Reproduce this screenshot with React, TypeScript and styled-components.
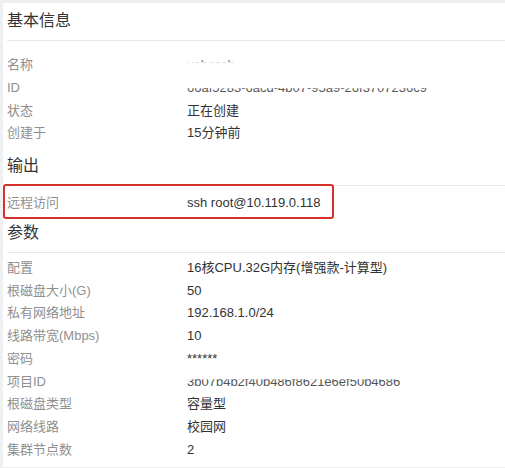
import * as React from "react";
import styled, { createGlobalStyle, css } from "styled-components";

interface TRow {
  label: string;
  value: string;
  hidden?: "name" | "id" | "project";
}

interface TSection {
  title: string;
  rows: TRow[];
  top: number;
  bottom: number;
  marked?: boolean;
}

const sections: TSection[] = [
  {
    title: "基本信息",
    top: 13,
    bottom: 3,
    rows: [
      { label: "名称", value: "usbcsch", hidden: "name" },
      { label: "ID", value: "66af5283-6acd-4b07-95a9-26f3707236c9", hidden: "id" },
      { label: "状态", value: "正在创建" },
      { label: "创建于", value: "15分钟前" },
    ],
  },
  {
    title: "输出",
    top: 6,
    bottom: 0,
    marked: true,
    rows: [{ label: "远程访问", value: "ssh root@10.119.0.118" }],
  },
  {
    title: "参数",
    top: 4,
    bottom: 5,
    rows: [
      { label: "配置", value: "16核CPU.32G内存(增强款-计算型)" },
      { label: "根磁盘大小(G)", value: "50" },
      { label: "私有网络地址", value: "192.168.1.0/24" },
      { label: "线路带宽(Mbps)", value: "10" },
      { label: "密码", value: "******" },
      { label: "项目ID", value: "3b07b4b2f40b486f8621e6ef50b4686", hidden: "project" },
      { label: "根磁盘类型", value: "容量型" },
      { label: "网络线路", value: "校园网" },
      { label: "集群节点数", value: "2" },
    ],
  },
];

const Global = createGlobalStyle`
  body {
    margin: 0;
    background: #eef0f2;
    font-family: "Liberation Sans", Arial, "Noto Sans CJK SC", sans-serif;
  }
`;

const Panel = styled.div`
  margin: 3px 0 3px 3px;
  padding-left: 4px;
  background: #fff;
`;

const Heading = styled.div`
  padding: 7px 0 8px;
  font-size: 16px;
  line-height: 22px;
  color: #333;
  border-bottom: 1px solid #e8e8e8;
`;

const Body = styled.div<{ $top: number; $bottom: number }>`
  padding: ${(p) => p.$top}px 0 ${(p) => p.$bottom}px;
`;

const Row = styled.div<{ $marked?: boolean }>`
  position: relative;
  display: grid;
  grid-template-columns: 180px 1fr;
  font-size: 13px;
  line-height: 22.75px;
  ${(p) =>
    p.$marked &&
    css`
      &::after {
        content: "";
        position: absolute;
        left: -4px;
        top: -8px;
        width: 327px;
        height: 31px;
        border: 2px solid #d8312b;
        border-radius: 3px;
      }
    `}
`;

const Label = styled.span`
  color: #8f8f8f;
`;

const Value = styled.span`
  color: #333;
`;

const clips = {
  name: "inset(6% 0 64% 0)",
  id: "inset(50% 0 10% 0)",
  project: "inset(38% 0 14% 0)",
};

const Hidden = styled.span<{ $kind: "name" | "id" | "project" }>`
  display: inline-block;
  color: #555;
  clip-path: ${(p) => clips[p.$kind]};
  opacity: ${(p) => (p.$kind === "name" ? 0.8 : 1)};
`;

export default function App() {
  return (
    <>
      <Global />
      <Panel>
        {sections.map((s) => (
          <section key={s.title}>
            <Heading>{s.title}</Heading>
            <Body $top={s.top} $bottom={s.bottom}>
              {s.rows.map((r) => (
                <Row key={r.label} $marked={s.marked}>
                  <Label>{r.label}</Label>
                  {r.hidden ? (
                    <Hidden $kind={r.hidden}>{r.value}</Hidden>
                  ) : (
                    <Value>{r.value}</Value>
                  )}
                </Row>
              ))}
            </Body>
          </section>
        ))}
      </Panel>
    </>
  );
}
